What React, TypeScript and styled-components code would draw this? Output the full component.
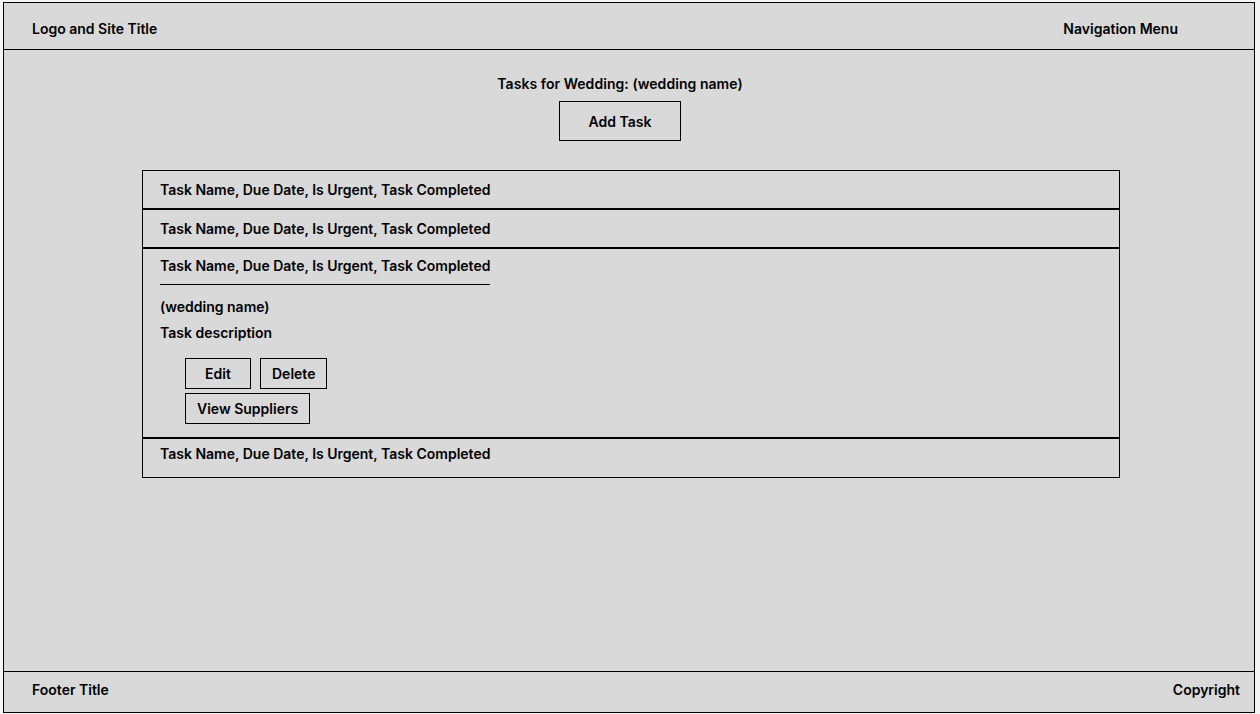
import styled, { createGlobalStyle } from "styled-components";

const GlobalStyle = createGlobalStyle`
  body {
    margin: 0;
    background-color: #f5f5f5;
    font-family: Inter, "Noto Sans", sans-serif;
    color: #000;
  }
`;

const tasks = [
  { id: 1, expanded: false },
  { id: 2, expanded: false },
  { id: 3, expanded: true },
  { id: 4, expanded: false },
];

const label = "Task Name, Due Date, Is Urgent, Task Completed";

export default function App() {
  return (
    <>
      <GlobalStyle />
      <Frame>
        <Header>
          <HeaderText>Logo and Site Title</HeaderText>
          <HeaderText>Navigation Menu</HeaderText>
        </Header>

        <Main>
          <TopBlock>
            <PageTitle>Tasks for Wedding: (wedding name)</PageTitle>
            <AddButton>Add Task</AddButton>
          </TopBlock>

          <TaskList>
            {tasks.map((task, i) =>
              task.expanded ? (
                <ExpandedRow key={task.id}>
                  <ExpandedTitle>{label}</ExpandedTitle>
                  <Detail>(wedding name)</Detail>
                  <Detail>Task description</Detail>
                  <Actions>
                    <ActionRow>
                      <SmallButton>Edit</SmallButton>
                      <SmallButton>Delete</SmallButton>
                    </ActionRow>
                    <ActionRow>
                      <SmallButton>View Suppliers</SmallButton>
                    </ActionRow>
                  </Actions>
                </ExpandedRow>
              ) : (
                <TaskRow key={task.id} $last={i === tasks.length - 1}>
                  {label}
                </TaskRow>
              )
            )}
          </TaskList>
        </Main>

        <Footer>
          <HeaderText>Footer Title</HeaderText>
          <HeaderText>Copyright</HeaderText>
        </Footer>
      </Frame>
    </>
  );
}

const Frame = styled.div`
  margin: 2px 0 0 3px;
  width: 1252px;
  height: 711px;
  box-sizing: border-box;
  border: 1px solid #000;
  background-color: #d9d9d9;
  display: flex;
  flex-direction: column;
`;

const Header = styled.header`
  height: 47px;
  border-bottom: 1px solid #000;
  padding: 17px 76px 0 28px;
  box-sizing: border-box;
  display: flex;
  justify-content: space-between;
  align-items: flex-start;
`;

const HeaderText = styled.span`
  font-size: 14px;
  line-height: 17px;
  font-weight: 600;
`;

const Main = styled.main`
  flex: 1;
  display: flex;
  flex-direction: column;
  padding-top: 25px;
`;

const TopBlock = styled.div`
  width: 1232px;
  display: flex;
  flex-direction: column;
  align-items: center;
`;

const PageTitle = styled.div`
  font-size: 14px;
  line-height: 17px;
  font-weight: 600;
  letter-spacing: 0.05px;
`;

const AddButton = styled.button`
  margin-top: 9px;
  width: 122px;
  height: 40px;
  border: 1px solid #000;
  background-color: transparent;
  font-family: inherit;
  font-size: 14px;
  font-weight: 600;
  color: #000;
  cursor: pointer;
`;

const TaskList = styled.div`
  margin: 29px 0 0 138px;
  width: 978px;
  border: 1px solid #000;
  box-sizing: border-box;
  display: flex;
  flex-direction: column;

  & > * + * {
    border-top: 2px solid #000;
  }
`;

const TaskRow = styled.div<{ $last?: boolean }>`
  height: ${(p) => (p.$last ? "32px" : "27px")};
  padding: ${(p) => (p.$last ? "6px" : "10px")} 17px 0;
  font-size: 14px;
  line-height: 17px;
  font-weight: 600;
`;

const ExpandedRow = styled.div`
  padding: 8px 17px 13px;
  display: flex;
  flex-direction: column;
  align-items: flex-start;
`;

const ExpandedTitle = styled.div`
  font-size: 14px;
  line-height: 17px;
  font-weight: 600;
  padding-bottom: 10px;
  border-bottom: 1px solid #000;
  margin-bottom: 4px;
`;

const Detail = styled.div`
  margin-top: 9px;
  font-size: 14px;
  line-height: 17px;
  font-weight: 600;
`;

const Actions = styled.div`
  margin: 17px 0 0 25px;
  display: flex;
  flex-direction: column;
  gap: 4px;
`;

const ActionRow = styled.div`
  display: flex;
  gap: 9px;
`;

const SmallButton = styled.button`
  min-width: 66px;
  height: 31px;
  padding: 0 11px;
  border: 1px solid #000;
  background-color: transparent;
  font-family: inherit;
  font-size: 14px;
  font-weight: 600;
  color: #000;
  cursor: pointer;
`;

const Footer = styled.footer`
  height: 41px;
  border-top: 1px solid #000;
  box-sizing: border-box;
  padding: 9px 14px 0 28px;
  display: flex;
  justify-content: space-between;
  align-items: flex-start;
`;
